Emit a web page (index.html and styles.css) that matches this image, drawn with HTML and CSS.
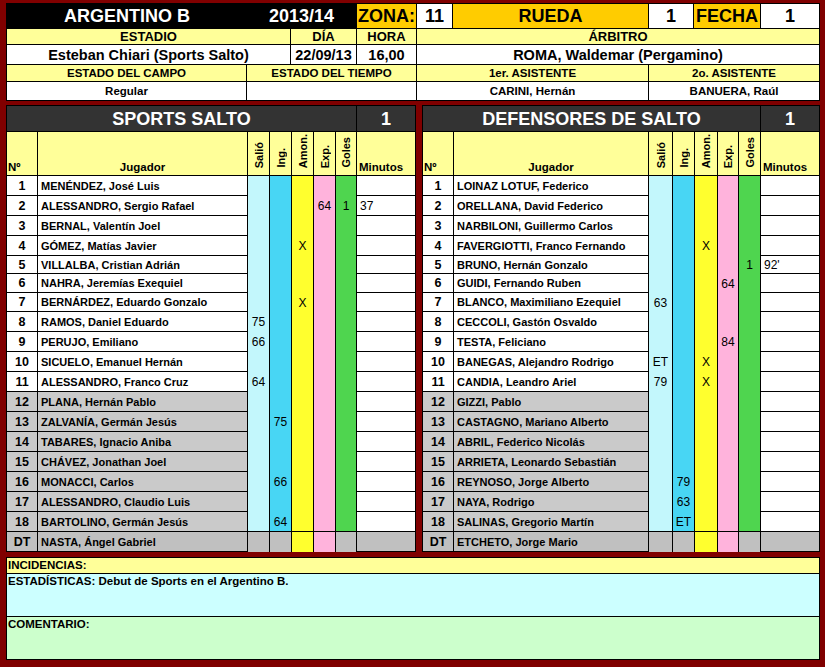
FILE: index.html
```html
<!DOCTYPE html>
<html lang="es">
<head>
<meta charset="utf-8">
<title>Argentino B 2013/14</title>
<link rel="stylesheet" href="styles.css">
</head>
<body>
<div class="page">
  <div class="info">
    <div class="ic band band-title"><span class="t1">ARGENTINO B</span><span class="t2">2013/14</span></div>
    <div class="ic gold zona">ZONA:</div>
    <div class="ic white big">11</div>
    <div class="ic gold big">RUEDA</div>
    <div class="ic white big">1</div>
    <div class="ic gold big fecha">FECHA</div>
    <div class="ic white big">1</div>

    <div class="ic lab span12">ESTADIO</div>
    <div class="ic lab">DÍA</div>
    <div class="ic lab">HORA</div>
    <div class="ic lab span59">ÁRBITRO</div>

    <div class="ic val span12">Esteban Chiari (Sports Salto)</div>
    <div class="ic val">22/09/13</div>
    <div class="ic val">16,00</div>
    <div class="ic val span59">ROMA, Waldemar (Pergamino)</div>

    <div class="ic lab2">ESTADO DEL CAMPO</div>
    <div class="ic lab2 span24">ESTADO DEL TIEMPO</div>
    <div class="ic lab2 span56">1er. ASISTENTE</div>
    <div class="ic lab2 span79">2o. ASISTENTE</div>

    <div class="ic val2">Regular</div>
    <div class="ic val2 span24"></div>
    <div class="ic val2 span56">CARINI, Hernán</div>
    <div class="ic val2 span79">BANUERA, Raúl</div>
  </div>

  <div class="teams">
    <div class="team team-l">
      <div class="thead"><div class="c tname">SPORTS SALTO</div><div class="c tscore">1</div></div>
      <div class="row colhead"><div class="c h-no">Nº</div><div class="c h-name">Jugador</div><div class="c h-v"><span>Salió</span></div><div class="c h-v"><span>Ing.</span></div><div class="c h-v"><span>Amon.</span></div><div class="c h-v"><span>Exp.</span></div><div class="c h-v"><span>Goles</span></div><div class="c h-min">Minutos</div></div>
      <div class="row"><div class="c no">1</div><div class="c nm">MENÉNDEZ, José Luis</div><div class="c sal"></div><div class="c ing"></div><div class="c amo"></div><div class="c exp"></div><div class="c gol"></div><div class="c min"></div></div>
      <div class="row"><div class="c no">2</div><div class="c nm">ALESSANDRO, Sergio Rafael</div><div class="c sal"></div><div class="c ing"></div><div class="c amo"></div><div class="c exp">64</div><div class="c gol">1</div><div class="c min">37</div></div>
      <div class="row"><div class="c no">3</div><div class="c nm">BERNAL, Valentín Joel</div><div class="c sal"></div><div class="c ing"></div><div class="c amo"></div><div class="c exp"></div><div class="c gol"></div><div class="c min"></div></div>
      <div class="row"><div class="c no">4</div><div class="c nm">GÓMEZ, Matías Javier</div><div class="c sal"></div><div class="c ing"></div><div class="c amo">X</div><div class="c exp"></div><div class="c gol"></div><div class="c min"></div></div>
      <div class="row h18"><div class="c no">5</div><div class="c nm">VILLALBA, Cristian Adrián</div><div class="c sal"></div><div class="c ing"></div><div class="c amo"></div><div class="c exp"></div><div class="c gol"></div><div class="c min"></div></div>
      <div class="row h19"><div class="c no">6</div><div class="c nm">NAHRA, Jeremías Exequiel</div><div class="c sal"></div><div class="c ing"></div><div class="c amo"></div><div class="c exp"></div><div class="c gol"></div><div class="c min"></div></div>
      <div class="row h19"><div class="c no">7</div><div class="c nm">BERNÁRDEZ, Eduardo Gonzalo</div><div class="c sal"></div><div class="c ing"></div><div class="c amo">X</div><div class="c exp"></div><div class="c gol"></div><div class="c min"></div></div>
      <div class="row"><div class="c no">8</div><div class="c nm">RAMOS, Daniel Eduardo</div><div class="c sal">75</div><div class="c ing"></div><div class="c amo"></div><div class="c exp"></div><div class="c gol"></div><div class="c min"></div></div>
      <div class="row"><div class="c no">9</div><div class="c nm">PERUJO, Emiliano</div><div class="c sal">66</div><div class="c ing"></div><div class="c amo"></div><div class="c exp"></div><div class="c gol"></div><div class="c min"></div></div>
      <div class="row"><div class="c no">10</div><div class="c nm">SICUELO, Emanuel Hernán</div><div class="c sal"></div><div class="c ing"></div><div class="c amo"></div><div class="c exp"></div><div class="c gol"></div><div class="c min"></div></div>
      <div class="row"><div class="c no">11</div><div class="c nm">ALESSANDRO, Franco Cruz</div><div class="c sal">64</div><div class="c ing"></div><div class="c amo"></div><div class="c exp"></div><div class="c gol"></div><div class="c min"></div></div>
      <div class="row res"><div class="c no">12</div><div class="c nm">PLANA, Hernán Pablo</div><div class="c sal"></div><div class="c ing"></div><div class="c amo"></div><div class="c exp"></div><div class="c gol"></div><div class="c min"></div></div>
      <div class="row res"><div class="c no">13</div><div class="c nm">ZALVANÍA, Germán Jesús</div><div class="c sal"></div><div class="c ing">75</div><div class="c amo"></div><div class="c exp"></div><div class="c gol"></div><div class="c min"></div></div>
      <div class="row res"><div class="c no">14</div><div class="c nm">TABARES, Ignacio Aniba</div><div class="c sal"></div><div class="c ing"></div><div class="c amo"></div><div class="c exp"></div><div class="c gol"></div><div class="c min"></div></div>
      <div class="row res"><div class="c no">15</div><div class="c nm">CHÁVEZ, Jonathan Joel</div><div class="c sal"></div><div class="c ing"></div><div class="c amo"></div><div class="c exp"></div><div class="c gol"></div><div class="c min"></div></div>
      <div class="row res"><div class="c no">16</div><div class="c nm">MONACCI, Carlos</div><div class="c sal"></div><div class="c ing">66</div><div class="c amo"></div><div class="c exp"></div><div class="c gol"></div><div class="c min"></div></div>
      <div class="row res"><div class="c no">17</div><div class="c nm">ALESSANDRO, Claudio Luis</div><div class="c sal"></div><div class="c ing"></div><div class="c amo"></div><div class="c exp"></div><div class="c gol"></div><div class="c min"></div></div>
      <div class="row res last"><div class="c no">18</div><div class="c nm">BARTOLINO, Germán Jesús</div><div class="c sal"></div><div class="c ing">64</div><div class="c amo"></div><div class="c exp"></div><div class="c gol"></div><div class="c min"></div></div>
      <div class="row dt"><div class="c no">DT</div><div class="c nm">NASTA, Ángel Gabriel</div><div class="c sal"></div><div class="c ing"></div><div class="c amo"></div><div class="c exp"></div><div class="c gol"></div><div class="c min"></div></div>
    </div>

    <div class="team team-r">
      <div class="thead"><div class="c tname">DEFENSORES DE SALTO</div><div class="c tscore">1</div></div>
      <div class="row colhead"><div class="c h-no">Nº</div><div class="c h-name">Jugador</div><div class="c h-v"><span>Salió</span></div><div class="c h-v"><span>Ing.</span></div><div class="c h-v"><span>Amon.</span></div><div class="c h-v"><span>Exp.</span></div><div class="c h-v"><span>Goles</span></div><div class="c h-min">Minutos</div></div>
      <div class="row"><div class="c no">1</div><div class="c nm">LOINAZ LOTUF, Federico</div><div class="c sal"></div><div class="c ing"></div><div class="c amo"></div><div class="c exp"></div><div class="c gol"></div><div class="c min"></div></div>
      <div class="row"><div class="c no">2</div><div class="c nm">ORELLANA, David Federico</div><div class="c sal"></div><div class="c ing"></div><div class="c amo"></div><div class="c exp"></div><div class="c gol"></div><div class="c min"></div></div>
      <div class="row"><div class="c no">3</div><div class="c nm">NARBILONI, Guillermo Carlos</div><div class="c sal"></div><div class="c ing"></div><div class="c amo"></div><div class="c exp"></div><div class="c gol"></div><div class="c min"></div></div>
      <div class="row"><div class="c no">4</div><div class="c nm">FAVERGIOTTI, Franco Fernando</div><div class="c sal"></div><div class="c ing"></div><div class="c amo">X</div><div class="c exp"></div><div class="c gol"></div><div class="c min"></div></div>
      <div class="row h18"><div class="c no">5</div><div class="c nm">BRUNO, Hernán Gonzalo</div><div class="c sal"></div><div class="c ing"></div><div class="c amo"></div><div class="c exp"></div><div class="c gol">1</div><div class="c min">92'</div></div>
      <div class="row h19"><div class="c no">6</div><div class="c nm">GUIDI, Fernando Ruben</div><div class="c sal"></div><div class="c ing"></div><div class="c amo"></div><div class="c exp">64</div><div class="c gol"></div><div class="c min"></div></div>
      <div class="row h19"><div class="c no">7</div><div class="c nm">BLANCO, Maximiliano Ezequiel</div><div class="c sal">63</div><div class="c ing"></div><div class="c amo"></div><div class="c exp"></div><div class="c gol"></div><div class="c min"></div></div>
      <div class="row"><div class="c no">8</div><div class="c nm">CECCOLI, Gastón Osvaldo</div><div class="c sal"></div><div class="c ing"></div><div class="c amo"></div><div class="c exp"></div><div class="c gol"></div><div class="c min"></div></div>
      <div class="row"><div class="c no">9</div><div class="c nm">TESTA, Feliciano</div><div class="c sal"></div><div class="c ing"></div><div class="c amo"></div><div class="c exp">84</div><div class="c gol"></div><div class="c min"></div></div>
      <div class="row"><div class="c no">10</div><div class="c nm">BANEGAS, Alejandro Rodrigo</div><div class="c sal">ET</div><div class="c ing"></div><div class="c amo">X</div><div class="c exp"></div><div class="c gol"></div><div class="c min"></div></div>
      <div class="row"><div class="c no">11</div><div class="c nm">CANDIA, Leandro Ariel</div><div class="c sal">79</div><div class="c ing"></div><div class="c amo">X</div><div class="c exp"></div><div class="c gol"></div><div class="c min"></div></div>
      <div class="row res"><div class="c no">12</div><div class="c nm">GIZZI, Pablo</div><div class="c sal"></div><div class="c ing"></div><div class="c amo"></div><div class="c exp"></div><div class="c gol"></div><div class="c min"></div></div>
      <div class="row res"><div class="c no">13</div><div class="c nm">CASTAGNO, Mariano Alberto</div><div class="c sal"></div><div class="c ing"></div><div class="c amo"></div><div class="c exp"></div><div class="c gol"></div><div class="c min"></div></div>
      <div class="row res"><div class="c no">14</div><div class="c nm">ABRIL, Federico Nicolás</div><div class="c sal"></div><div class="c ing"></div><div class="c amo"></div><div class="c exp"></div><div class="c gol"></div><div class="c min"></div></div>
      <div class="row res"><div class="c no">15</div><div class="c nm">ARRIETA, Leonardo Sebastián</div><div class="c sal"></div><div class="c ing"></div><div class="c amo"></div><div class="c exp"></div><div class="c gol"></div><div class="c min"></div></div>
      <div class="row res"><div class="c no">16</div><div class="c nm">REYNOSO, Jorge Alberto</div><div class="c sal"></div><div class="c ing">79</div><div class="c amo"></div><div class="c exp"></div><div class="c gol"></div><div class="c min"></div></div>
      <div class="row res"><div class="c no">17</div><div class="c nm">NAYA, Rodrigo</div><div class="c sal"></div><div class="c ing">63</div><div class="c amo"></div><div class="c exp"></div><div class="c gol"></div><div class="c min"></div></div>
      <div class="row res last"><div class="c no">18</div><div class="c nm">SALINAS, Gregorio Martín</div><div class="c sal"></div><div class="c ing">ET</div><div class="c amo"></div><div class="c exp"></div><div class="c gol"></div><div class="c min"></div></div>
      <div class="row dt"><div class="c no">DT</div><div class="c nm">ETCHETO, Jorge Mario</div><div class="c sal"></div><div class="c ing"></div><div class="c amo"></div><div class="c exp"></div><div class="c gol"></div><div class="c min"></div></div>
    </div>
  </div>

  <div class="notes">
    <div class="n-inc">INCIDENCIAS:</div>
    <div class="n-est">ESTADÍSTICAS: Debut de Sports en el Argentino B.</div>
    <div class="n-com">COMENTARIO:</div>
  </div>
</div>
</body>
</html>
```

FILE: styles.css
```css
* { box-sizing: border-box; }
html, body { margin: 0; padding: 0; }
body {
  background: #800000;
  font-family: "Liberation Sans", Arial, sans-serif;
  font-weight: bold;
  color: #000;
  width: 825px;
  height: 667px;
  overflow: hidden;
}
.page {
  padding: 3px 0 0 6px;
  display: flex;
  flex-direction: column;
}

/* ---------- info block ---------- */
.info {
  display: grid;
  grid-template-columns: 239px 43px 65px 59px 35px 195px 44px 66px 58px;
  grid-template-rows: 24px 15px 19px 16px 18px;
  gap: 1px;
  background: #000;
  border: 1px solid #000;
  width: 814px;
}
.ic {
  display: flex;
  align-items: center;
  justify-content: center;
  white-space: nowrap;
  overflow: hidden;
}
.band { background: #000; color: #fff; font-size: 18px; }
.band-title { grid-column: 1 / 4; justify-content: flex-start; }
.band-title .t1 { margin-left: 57px; }
.band-title .t2 { margin-left: auto; margin-right: 22px; }
.gold { background: #ffcc00; font-size: 18px; }
.white { background: #fff; }
.big { font-size: 18px; }
.zona { justify-content: flex-start; padding-left: 1px; }
.fecha { justify-content: flex-start; padding-left: 2px; }
.lab { background: #ffff99; font-size: 13px; }
.val { background: #fff; font-size: 14.5px; }
.lab2 { background: #ffff99; font-size: 11.5px; }
.val2 { background: #fff; font-size: 11.5px; }
.span12 { grid-column: 1 / 3; }
.span59 { grid-column: 5 / 10; }
.span24 { grid-column: 2 / 5; }
.span56 { grid-column: 5 / 7; }
.span79 { grid-column: 7 / 10; }

/* ---------- teams ---------- */
.teams {
  display: flex;
  gap: 6px;
  margin-top: 4px;
}
.team {
  border-left: 1px solid #000;
  border-top: 1px solid #000;
  display: flex;
  flex-direction: column;
}
.team-l { width: 410px; --cols: 31px 210px 22px 22px 22px 22px 21px 59px; }
.team-r { width: 398px; --cols: 31px 195px 24px 22px 23px 21px 22px 59px; }

.c {
  border-right: 1px solid #000;
  border-bottom: 1px solid #000;
  display: flex;
  align-items: center;
  white-space: nowrap;
  overflow: hidden;
  font-size: 12px;
  background-color: #fff;
}
.thead {
  display: grid;
  grid-template-columns: 1fr 59px;
  height: 26px;
}
.tname, .tscore {
  background: #333333;
  color: #fff;
  font-size: 18px;
  justify-content: center;
  padding-top: 1px;
}
.row {
  display: grid;
  grid-template-columns: var(--cols);
  height: 20px;
}
.row.h18 { height: 18px; }
.row.h19 { height: 19px; }
.colhead { height: 44px; }
.colhead .c {
  background: #ffff99;
  align-items: flex-end;
  font-size: 11.5px;
  padding-bottom: 2px;
}
.h-no { padding-left: 1px; }
.h-name { justify-content: center; font-size: 12px; }
.h-min { padding-left: 2px; }
.h-v { justify-content: center; }
.h-v span {
  writing-mode: vertical-rl;
  transform: rotate(180deg);
  font-size: 11px;
  margin-bottom: 5px;
}

.no { justify-content: center; font-size: 12.5px; }
.nm { padding-left: 3px; font-size: 11px; }
.sal, .ing, .amo, .exp, .gol {
  justify-content: center;
  border-bottom: none;
  font-weight: normal;
  font-size: 12px;
}
.row.last .sal, .row.last .ing, .row.last .amo, .row.last .exp, .row.last .gol { border-bottom: 1px solid #000; }
.min { padding-left: 3px; font-weight: normal; }

.sal { background-color: #c3f7fc; }
.ing { background-color: #48d6f4; }
.amo { background-color: #ffff2e; }
.exp { background-color: #ffb3dc; }
.gol { background-color: #4fd54f; }
.res .no, .res .nm { background-color: #cacaca; }
.dt .no, .dt .nm, .dt .sal, .dt .ing, .dt .gol, .dt .min {
  background-color: #c0c0c0;
}

/* ---------- notes ---------- */
.notes {
  margin-top: 5px;
  width: 814px;
  border: 1px solid #000;
  font-size: 11.5px;
}
.n-inc {
  background: #ffff99;
  height: 16px;
  border-bottom: 1px solid #000;
  padding-left: 1px;
  line-height: 15px;
}
.n-est {
  background: #ccffff;
  height: 43px;
  border-bottom: 1px solid #000;
  padding-left: 1px;
  line-height: 15px;
}
.n-com {
  background: #ccffcc;
  height: 42px;
  padding-left: 1px;
  line-height: 15px;
}
```
